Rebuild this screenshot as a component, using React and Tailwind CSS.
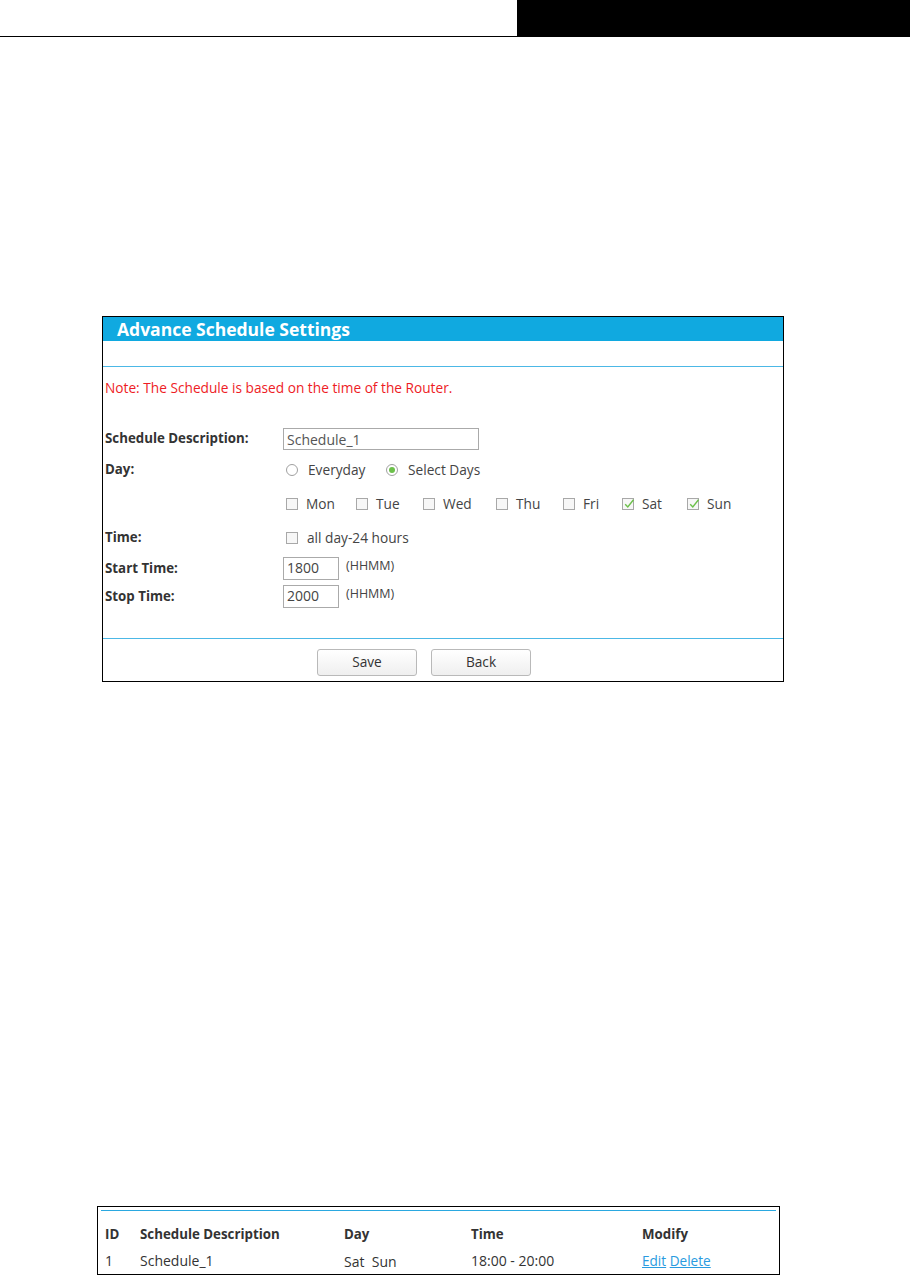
import React from 'react';

const font = { fontFamily: '"Open Sans", "DejaVu Sans", sans-serif' };

function Radio({ checked, label }) {
  return (
    <div className="flex items-center">
      <span className="ml-[3px] flex h-[12px] w-[12px] items-center justify-center rounded-full border border-[#a0a0a0] bg-white">
        {checked && <span className="h-[6px] w-[6px] rounded-full bg-[#6cc04a]" />}
      </span>
      <span className="ml-[10px] text-[13.7px] text-[#444]">{label}</span>
    </div>
  );
}

function Check({ checked, label, gap = 'ml-[8px]' }) {
  return (
    <div className="flex items-center">
      <span className="relative ml-[3px] h-[12px] w-[12px] shrink-0 border border-[#a8a8a8] bg-[#f7f7f7]">
        {checked && (
          <svg viewBox="0 0 12 12" className="absolute left-[0px] top-[-1px] h-[12px] w-[12px]">
            <path d="M2.2 6.2 L4.8 9 L10.5 1.8" fill="none" stroke="#6cc04a" strokeWidth="1.4" />
          </svg>
        )}
      </span>
      <span className={`${gap} text-[13.7px] text-[#444]`}>{label}</span>
    </div>
  );
}

function Row({ label, className = '', children }) {
  return (
    <div className={`flex items-center ${className}`}>
      <div className="w-[178px] shrink-0 text-[13.3px] font-bold text-[#333]">{label}</div>
      <div className="flex items-center">{children}</div>
    </div>
  );
}

function Button({ children }) {
  return (
    <button className="h-[27px] w-[100px] rounded-[3px] border border-[#b9b9b9] bg-gradient-to-b from-white to-[#efefef] text-[13.7px] text-[#333]">
      {children}
    </button>
  );
}

export default function App() {
  const days = [
    ['Mon', false, 'w-[70px]'],
    ['Tue', false, 'w-[67px]'],
    ['Wed', false, 'w-[73px]'],
    ['Thu', false, 'w-[67px]'],
    ['Fri', false, 'w-[59px]'],
    ['Sat', true, 'w-[65px]'],
    ['Sun', true, 'w-[60px]'],
  ];

  return (
    <div className="relative h-[1275px] w-[910px] overflow-hidden bg-white" style={font}>
      {/* page header */}
      <div className="flex h-[37px]">
        <div className="w-[517px] border-b border-black" />
        <div className="flex-1 bg-black" />
      </div>

      {/* settings panel */}
      <div className="ml-[102px] mt-[279px] w-[682px] border border-black">
        <div className="flex h-[24px] items-center bg-[#10a9e0] pl-[14px] text-[17.5px] font-bold text-white">
          Advance Schedule Settings
        </div>
        <div className="h-[26px] border-b border-[#4cb8e6]" />

        <div className="px-[2px] pt-[11px]">
          <div className="text-[13.7px] leading-[19px] text-[#ee1c25]">
            Note: The Schedule is based on the time of the Router.
          </div>

          <Row label="Schedule Description:" className="mt-[31px] h-[22px]">
            <div className="flex h-[22px] w-[196px] items-center border border-[#aaa] pl-[3px] text-[14px] text-[#555]">
              Schedule_1
            </div>
          </Row>

          <Row label="Day:" className="mt-[9px] h-[22px]">
            <div className="w-[100px]">
              <Radio label="Everyday" />
            </div>
            <Radio checked label="Select Days" />
          </Row>

          <div className="mt-[12px] flex h-[22px] items-center pl-[178px]">
            {days.map(([d, c, w]) => (
              <div key={d} className={`${w} shrink-0`}>
                <Check checked={c} label={d} />
              </div>
            ))}
          </div>

          <Row label="Time:" className="mt-[12px] h-[22px]">
            <Check label="all day-24 hours" gap="ml-[9px]" />
          </Row>

          <Row label="Start Time:" className="mt-[8px] h-[23px]">
            <div className="flex h-[23px] w-[56px] items-end border border-[#aaa] pb-[1px] pl-[3px] text-[14px] text-[#444]">
              1800
            </div>
            <span className="ml-[7px] -mt-[4px] text-[12.5px] text-[#444]">(HHMM)</span>
          </Row>

          <Row label="Stop Time:" className="mt-[5px] h-[23px]">
            <div className="flex h-[23px] w-[56px] items-end border border-[#aaa] pb-[1px] pl-[3px] text-[14px] text-[#444]">
              2000
            </div>
            <span className="ml-[7px] -mt-[4px] text-[12.5px] text-[#444]">(HHMM)</span>
          </Row>
        </div>

        <div className="mt-[30px] border-t border-[#4cb8e6]" />
        <div className="flex h-[42px] items-start gap-[14px] pl-[214px] pt-[10px]">
          <Button>Save</Button>
          <Button>Back</Button>
        </div>
      </div>

      {/* schedule table */}
      <div className="ml-[97px] mt-[524px] h-[69px] w-[683px] border border-black px-[3px] pt-[3px]">
        <div className="border-t border-[#2aa8e0]" />
        <div className="mt-[14px] flex text-[13.3px] font-bold text-[#333]">
          <div className="w-[39px] pl-[4px]">ID</div>
          <div className="w-[204px]">Schedule Description</div>
          <div className="w-[127px]">Day</div>
          <div className="w-[171px]">Time</div>
          <div>Modify</div>
        </div>
        <div className="mt-[5px] flex text-[14px] text-[#333]">
          <div className="w-[39px] pl-[4px]">1</div>
          <div className="w-[204px]">Schedule_1</div>
          <div className="w-[127px] pt-[1px]">Sat&nbsp;&nbsp;Sun</div>
          <div className="w-[171px]">18:00 - 20:00</div>
          <div className="pt-[1px] text-[13.6px] text-[#2a9be0]">
            <span className="underline">Edit</span> <span className="underline">Delete</span>
          </div>
        </div>
      </div>
    </div>
  );
}
